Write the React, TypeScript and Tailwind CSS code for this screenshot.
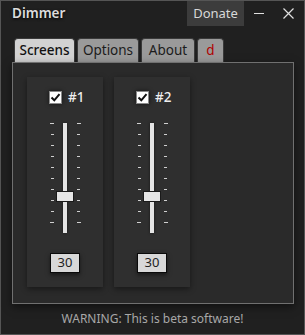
import React from 'react'

const FONT = { fontFamily: '"Noto Sans", "Open Sans", sans-serif' }

const TABS = [
  { label: 'Screens', w: 'w-[61px]', active: true },
  { label: 'Options', w: 'w-[62px]' },
  { label: 'About', w: 'w-[54px]' },
  { label: 'd', w: 'w-[27px]', red: true },
]

const TICKS = [0, 1, 2, 3, 4, 5, 6, 7, 8, 9]

function Tick({ end, side }: { end: boolean; side: 'l' | 'r' }) {
  return (
    <div className={`flex h-[12px] items-start ${side === 'l' ? 'justify-end' : 'justify-start'}`}>
      <div className={`h-px bg-[#d0d0d0] ${end ? 'w-[4px]' : 'w-[3px]'}`} />
    </div>
  )
}

function ScreenCard({ name }: { name: string }) {
  return (
    <div className="flex h-[210px] w-[76px] flex-col items-center bg-[#2f2f2f] shadow-[0_2px_6px_rgba(0,0,0,0.45)]">
      {/* checkbox + label */}
      <div className="mt-[14px] flex h-[13px] w-full items-center pl-[22px]">
        <div className="flex h-[13px] w-[13px] items-center justify-center border border-[#8a8a8a] bg-white shadow-[0_0_4px_rgba(0,0,0,0.6)]">
          <svg width="11" height="11" viewBox="0 0 11 11">
            <path d="M1.5 5.5 L4.3 8.3 L9.5 2.2" fill="none" stroke="#111" strokeWidth="2" />
          </svg>
        </div>
        <span className="ml-[6px] text-[13.5px] font-medium leading-none text-[#eeeeee]">{name}</span>
      </div>

      {/* slider */}
      <div className="mt-[19px] flex h-[110px] w-full pl-[23px]">
        <div className="flex w-[4px] flex-col">
          {TICKS.map(i => <Tick key={i} side="l" end={i === 0 || i === 9} />)}
        </div>
        <div className="relative ml-[2px] w-[18px]">
          <div className="absolute left-[7px] top-0 h-[110px] w-[4px] bg-[#e4e4e4] shadow-[0_0_3px_rgba(0,0,0,0.5)]" />
          <div className="absolute left-0 top-[68px] h-[11px] w-[18px] border border-[#1a1a1a] bg-[#e6e6e6]" />
        </div>
        <div className="ml-[3px] flex w-[4px] flex-col">
          {TICKS.map(i => <Tick key={i} side="r" end={i === 0 || i === 9} />)}
        </div>
      </div>

      {/* value */}
      <div className="mt-[20px] flex h-[20px] w-[30px] items-center justify-center border border-[#0a0a0a] bg-[#d8d8d8] text-[13px] text-[#222] shadow-[0_2px_4px_rgba(0,0,0,0.5)]">
        30
      </div>
    </div>
  )
}

export default function App() {
  return (
    <div style={FONT} className="flex h-[335px] w-[305px] flex-col border border-[#555] bg-[#202020]">
      {/* title bar */}
      <div className="flex h-[25px] items-center">
        <span className="ml-[11px] text-[13.5px] font-semibold text-[#dcdcdc] [text-shadow:0_1px_3px_rgba(0,0,0,0.9)]">Dimmer</span>
        <div className="ml-auto flex h-[25px] w-[57px] items-center justify-center bg-[#3c3c3c] text-[13px] text-[#d8d8d8]">
          Donate
        </div>
        <div className="flex h-[25px] w-[29px] items-center justify-center">
          <div className="h-px w-[10px] bg-[#e0e0e0]" />
        </div>
        <div className="flex h-[25px] w-[31px] items-center justify-center">
          <svg width="11" height="11" viewBox="0 0 11 11">
            <path d="M0.5 0.5 L10.5 10.5 M10.5 0.5 L0.5 10.5" stroke="#e0e0e0" strokeWidth="1.2" />
          </svg>
        </div>
      </div>

      {/* tabs */}
      <div className="ml-[13px] mt-[12px] flex h-[24px] gap-[2px]">
        {TABS.map(t => (
          <div
            key={t.label}
            className={`flex ${t.w} items-center justify-center rounded-t-[4px] border border-b-0 border-[#3a3a3a] text-[13.5px] ${
              t.active ? 'bg-[#d2d2d2] font-medium text-[#111]' : 'bg-[#9a9a9a] text-[#1c1c1c]'
            } ${t.red ? 'font-normal text-[#b00000]' : ''}`}
          >
            {t.label}
          </div>
        ))}
      </div>

      {/* tab panel */}
      <div className="ml-[11px] h-[242px] w-[282px] border border-[#707070] bg-[#2a2a2a] shadow-[0_3px_8px_rgba(0,0,0,0.5)]">
        <div className="flex gap-[11px] pl-[14px] pt-[14px]">
          <ScreenCard name="#1" />
          <ScreenCard name="#2" />
        </div>
      </div>

      {/* footer */}
      <div className="mt-[6px] text-center text-[12px] text-[#a8a8a8]">WARNING: This is beta software!</div>
    </div>
  )
}
